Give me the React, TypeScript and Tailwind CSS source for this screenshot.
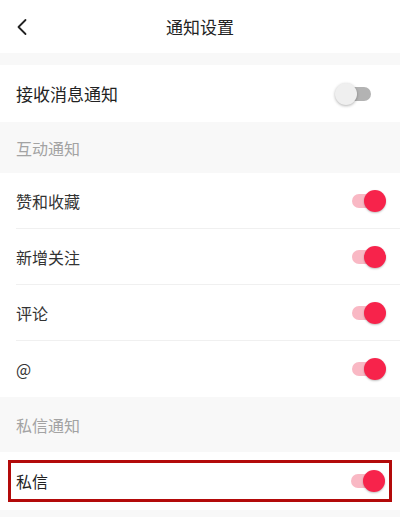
import React from "react";

const font = { fontFamily: '"Noto Sans CJK SC", "Noto Sans", sans-serif' };

function Toggle({ on }: { on: boolean }) {
  if (on) {
    return (
      <div className="relative h-[22px] w-[40px]">
        <div className="absolute left-[6px] top-[4px] h-[14px] w-[30px] rounded-full bg-[#f9b8c4]" />
        <div className="absolute right-0 top-0 h-[22px] w-[22px] rounded-full bg-[#f7234b] shadow-[0_1px_2px_rgba(0,0,0,0.25)]" />
      </div>
    );
  }
  return (
    <div className="relative h-[22px] w-[40px]">
      <div className="absolute left-[6px] top-[4px] h-[14px] w-[30px] rounded-full bg-[#b3b3b3]" />
      <div className="absolute left-0 top-0 h-[22px] w-[22px] rounded-full bg-[#efefef] shadow-[0_1px_3px_rgba(0,0,0,0.3)]" />
    </div>
  );
}

function Row({ label, on, divider = true }: { label: string; on: boolean; divider?: boolean }) {
  return (
    <div className="bg-white pl-4">
      <div className={`flex h-[56px] items-center justify-between pr-[14px] ${divider ? "border-b border-[#f0f0f0]" : ""}`}>
        <span className="text-[16px] text-[#333]">{label}</span>
        <Toggle on={on} />
      </div>
    </div>
  );
}

function Section({ title, tall = false }: { title: string; tall?: boolean }) {
  return (
    <div className={`flex items-center bg-[#f8f8f8] px-4 ${tall ? "h-[55px]" : "h-[51px]"}`}>
      <span className="text-[16px] text-[#a3a3a3]">{title}</span>
    </div>
  );
}

export default function App() {
  return (
    <div className="h-[517px] w-[400px] overflow-hidden bg-[#f8f8f8]" style={font}>
      {/* 顶部导航 */}
      <div className="relative flex h-[53px] items-center justify-center bg-white">
        <svg className="absolute left-[16px] top-[18px]" width="12" height="18" viewBox="0 0 12 18" fill="none">
          <path d="M9.5 2 L2.5 9 L9.5 16" stroke="#222" strokeWidth="1.8" strokeLinecap="round" strokeLinejoin="round" />
        </svg>
        <span className="text-[17px] text-[#222]">通知设置</span>
      </div>

      <div className="h-[12px]" />

      <div className="bg-white pl-4">
        <div className="flex h-[57px] items-center justify-between pr-[25px]">
          <span className="text-[17px] text-[#222]">接收消息通知</span>
          <Toggle on={false} />
        </div>
      </div>

      <Section title="互动通知" />
      <Row label="赞和收藏" on />
      <Row label="新增关注" on />
      <Row label="评论" on />
      <Row label="@" on divider={false} />

      <Section title="私信通知" tall />
      <div className="bg-white px-2 py-2">
        <div className="flex h-[42px] items-center justify-between border-[3px] border-[#b30a0a] pl-[5px] pr-[4px]">
          <span className="text-[16px] text-[#222]">私信</span>
          <Toggle on />
        </div>
      </div>
    </div>
  );
}
